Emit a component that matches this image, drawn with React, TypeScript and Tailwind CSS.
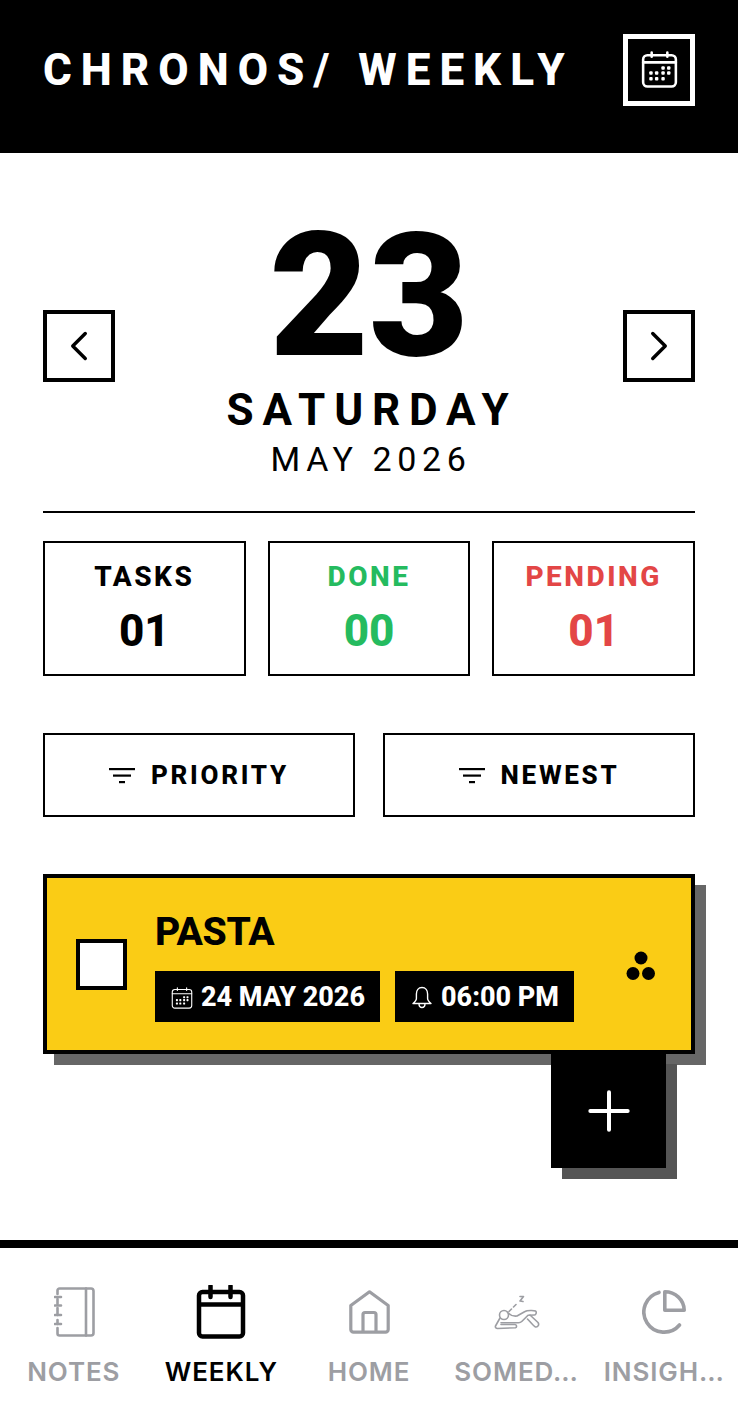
import { ChevronLeft, ChevronRight, Plus } from "lucide-react";

const roboto = "font-['Roboto',sans-serif]";

function CalendarDots({ className, stroke = 1.5 }: { className?: string; stroke?: number }) {
  const dots = [
    [15.5, 12],
    [19.5, 12],
    [7, 15.5],
    [11, 15.5],
    [15.5, 15.5],
    [19.5, 15.5],
    [7, 19.5],
    [11, 19.5],
    [15.5, 19.5],
  ];
  return (
    <svg viewBox="0 0 26 26" fill="none" stroke="currentColor" className={className}>
      <rect x="1.500" y="3" width="23" height="22" rx="3" strokeWidth={stroke} />
      <path d="M1.500 8h23M7.500 1v3M18.500 1v3" strokeWidth={stroke} strokeLinecap="round" />
      {dots.map(([x, y]) => (
        <rect key={`${x}-${y}`} x={x - 1.2} y={y - 1.2} width="2.4" height="2.4" rx="0.7" fill="currentColor" stroke="none" />
      ))}
    </svg>
  );
}

function BellIcon({ className }: { className?: string }) {
  return (
    <svg viewBox="0 0 24 24" fill="none" stroke="currentColor" strokeWidth="1.400" strokeLinejoin="round" className={className}>
      <path d="M12 1.500c-3.600 0-5.600 2.800-5.600 6.400v4.600c0 1.700-1.400 3.200-3.400 5h18c-2-1.800-3.400-3.300-3.400-5V7.900c0-3.600-2-6.400-5.600-6.400z" />
      <path d="M9 17.500c0 2.300 1.300 4 3 4s3-1.700 3-4" />
    </svg>
  );
}

function FilterIcon({ className }: { className?: string }) {
  return (
    <svg viewBox="0 0 26 16" fill="currentColor" className={className}>
      <rect x="0" y="0" width="26" height="2.200" />
      <rect x="4" y="6.500" width="18" height="2.200" />
      <rect x="10" y="13" width="6" height="2.200" />
    </svg>
  );
}

function NotesIcon() {
  return (
    <svg viewBox="0 0 41 50" fill="none" stroke="currentColor" strokeWidth="2.600" className="ml-[2px] h-[50px] w-[41px]" strokeLinecap="round" strokeLinejoin="round">
      <path d="M3.500 7V3.500a2 2 0 0 1 2-2H37a2.500 2.500 0 0 1 2.500 2.500v42a2.500 2.500 0 0 1-2.500 2.500H5.500a2 2 0 0 1-2-2V41" />
      <path d="M3.500 12v5M3.500 21v7M3.500 33v4M32 1.500v47" />
      <path d="M1 10h6M1 18.500h6M1 28h6M1 37h6" />
    </svg>
  );
}

function WeeklyIcon() {
  return (
    <svg viewBox="0 0 50 54" fill="none" stroke="currentColor" strokeWidth="4.500" className="h-[54px] w-[50px]" strokeLinejoin="round">
      <rect x="3" y="7" width="44" height="44.500" rx="3.500" />
      <path d="M3 19.500h44" />
      <path d="M14.500 1v11M34.500 1v11" strokeLinecap="round" />
    </svg>
  );
}

function HomeIcon() {
  return (
    <svg viewBox="0 0 41 44" fill="none" stroke="currentColor" strokeWidth="3.200" className="ml-[1px] h-[44px] w-[41px]" strokeLinejoin="round">
      <path d="M1.800 15.500 20.500 1.800l18.700 13.700V39.500a2.700 2.700 0 0 1-2.700 2.700H4.500a2.700 2.700 0 0 1-2.700-2.700z" />
      <path d="M14 42.200V24.500a2 2 0 0 1 2-2h9a2 2 0 0 1 2 2v17.700" />
    </svg>
  );
}

function SomedayIcon() {
  return (
    <svg viewBox="0 0 46 35" fill="none" stroke="currentColor" strokeWidth="1.600" className="h-[35px] w-[46px]" strokeLinecap="round" strokeLinejoin="round">
      <path d="M26 1.500h3.500L26 6l3 .5M22 9.500l-2.500 2.500M17.500 14l-2.500 2.500" />
      <circle cx="10" cy="20" r="4.500" />
      <path d="M13.500 17.500c2.500 2.500 6 4 9.500 3.500l8-4.500c2-1.200 9-1.200 10.500-.5 1.500 1 .5 4-1 4l-6.500.3-6 6c-1 1-2 1.500-3.500 1.500H7" />
      <path d="M6 23 1.500 31c-.5 1.500.5 2.500 2 2.500l18-.8c1.500-.5 1.500-3-.5-3.200H7" />
      <path d="M36 20l8 7.500c1.500 2 0 5-2.500 4.500-1.500-.3-6.500-6.500-8-8" />
    </svg>
  );
}

function InsightsIcon() {
  return (
    <svg viewBox="0 0 44 44" fill="none" stroke="currentColor" strokeWidth="3.600" className="h-[44px] w-[44px]" strokeLinejoin="round">
      <path d="M17 2.400A20.200 20.200 0 1 0 37.500 35" strokeLinecap="round" />
      <path d="M22.800 1.800C33.500 1.800 42 10 42.200 20.200H22.800z" />
    </svg>
  );
}

function StatBox({ label, value, color }: { label: string; value: string; color: string }) {
  return (
    <div className="flex h-[135px] flex-1 flex-col items-center border-2 border-black pt-[16px]">
      <div className={`text-[28px] leading-[36px] font-extrabold tracking-[0.09em] ${color}`}>{label}</div>
      <div className={`mt-[10px] text-[44px] leading-[52px] font-extrabold ${color}`}>{value}</div>
    </div>
  );
}

function SortButton({ label }: { label: string }) {
  return (
    <button className="flex h-[84px] flex-1 items-center justify-center gap-4 border-2 border-black pt-[1px] text-[26px] font-extrabold tracking-[0.105em]">
      <FilterIcon className="h-[16px] w-[26px]" />
      {label}
    </button>
  );
}

function Chip({ icon, label }: { icon: React.ReactNode; label: string }) {
  return (
    <div className="flex h-[51px] items-center gap-2 bg-black pt-[2px] pr-[15px] pl-4 text-[27px] font-extrabold text-white">
      {icon}
      {label}
    </div>
  );
}

function NavItem({ icon, label, active }: { icon: React.ReactNode; label: string; active?: boolean }) {
  return (
    <div className={`flex min-w-0 flex-col items-center ${active ? "text-black" : "text-[#9d9ea3]"}`}>
      <div className="flex h-[60px] items-center justify-center">{icon}</div>
      <div className="mt-[14px] text-center font-['Inter',sans-serif] text-[26px] leading-[32px] font-semibold tracking-[0.035em] whitespace-nowrap">
        {label}
      </div>
    </div>
  );
}

export default function App() {
  return (
    <div className={`flex h-[1414px] w-[738px] flex-col bg-white text-black ${roboto}`}>
      <header className="flex h-[153px] items-center justify-between bg-black px-[43px] pb-[14px] text-white">
        <h1 className="text-[44px] font-extrabold tracking-[0.205em] whitespace-nowrap">CHRONOS/ WEEKLY</h1>
        <button className="flex size-[72px] items-center justify-center border-[5px] border-white">
          <CalendarDots className="size-[37px]" stroke={1.800} />
        </button>
      </header>

      <main className="relative flex flex-1 flex-col px-[43px]">
        <div className="flex h-[358px] items-start justify-between">
          <button className="mt-[157px] flex size-[72px] items-center justify-center border-4 border-black">
            <ChevronLeft className="size-[50px]" strokeWidth={1.650} />
          </button>
          <div className="flex flex-col items-center">
            <div className="mt-[63px] text-[172px] leading-[160px] font-black">23</div>
            <div className="mt-[8px] ml-[6px] text-[44px] leading-[52px] font-bold tracking-[0.2em]">SATURDAY</div>
            <div className="mt-[3px] ml-[4px] text-[34px] leading-[40px] tracking-[0.165em]">MAY 2026</div>
          </div>
          <button className="mt-[157px] flex size-[72px] items-center justify-center border-4 border-black">
            <ChevronRight className="size-[50px]" strokeWidth={1.650} />
          </button>
        </div>

        <div className="h-[2px] bg-black" />

        <div className="mt-[28px] flex gap-[22px]">
          <StatBox label="TASKS" value="01" color="text-black" />
          <StatBox label="DONE" value="00" color="text-[#25bb5f]" />
          <StatBox label="PENDING" value="01" color="text-[#e34646]" />
        </div>

        <div className="mt-[57px] flex gap-[28px]">
          <SortButton label="PRIORITY" />
          <SortButton label="NEWEST" />
        </div>

        <div className="mt-[57px] flex h-[180px] items-center border-4 border-black bg-[#facc15] pr-[35px] pl-[29px] shadow-[11px_11px_0_0_#666666]">
          <div className="size-[51px] shrink-0 border-4 border-black bg-white" />
          <div className="ml-[28px] flex-1 pt-[4px]">
            <div className="text-[39px] leading-[44px] font-extrabold tracking-[-0.01em]">PASTA</div>
            <div className="mt-[17px] flex gap-[15px]">
              <Chip icon={<CalendarDots className="size-[22px]" stroke={1.300} />} label="24 MAY 2026" />
              <Chip icon={<BellIcon className="-mx-[1px] size-[24px]" />} label="06:00 PM" />
            </div>
          </div>
          <svg viewBox="0 0 30 30" fill="currentColor" className="mt-[3px] size-[30px]">
            <circle cx="15" cy="7" r="6.500" />
            <circle cx="7" cy="22.500" r="6.500" />
            <circle cx="22.500" cy="22.500" r="6.500" />
          </svg>
        </div>

        <button className="absolute top-[900px] right-[72px] flex size-[115px] items-center justify-center bg-black text-white shadow-[11px_11px_0_0_#555555]">
          <Plus className="size-[64px]" strokeWidth={1.500} />
        </button>
      </main>

      <nav className="grid h-[174px] grid-cols-5 border-t-8 border-black pt-[34px]">
        <NavItem icon={<NotesIcon />} label="NOTES" />
        <NavItem icon={<WeeklyIcon />} label="WEEKLY" active />
        <NavItem icon={<HomeIcon />} label="HOME" />
        <NavItem icon={<SomedayIcon />} label="SOMED…" />
        <NavItem icon={<InsightsIcon />} label="INSIGH…" />
      </nav>
    </div>
  );
}
